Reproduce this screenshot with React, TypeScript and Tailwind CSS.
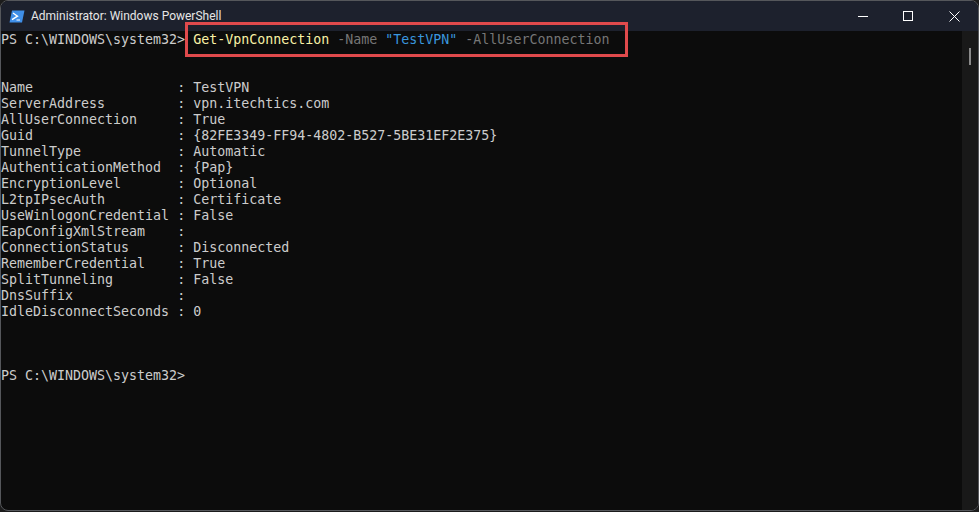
const rows: [string, string][] = [
  ["Name", "TestVPN"],
  ["ServerAddress", "vpn.itechtics.com"],
  ["AllUserConnection", "True"],
  ["Guid", "{82FE3349-FF94-4802-B527-5BE31EF2E375}"],
  ["TunnelType", "Automatic"],
  ["AuthenticationMethod", "{Pap}"],
  ["EncryptionLevel", "Optional"],
  ["L2tpIPsecAuth", "Certificate"],
  ["UseWinlogonCredential", "False"],
  ["EapConfigXmlStream", ""],
  ["ConnectionStatus", "Disconnected"],
  ["RememberCredential", "True"],
  ["SplitTunneling", "False"],
  ["DnsSuffix", ""],
  ["IdleDisconnectSeconds", "0"],
];

function PsIcon() {
  return (
    <svg width="16" height="13" viewBox="0 0 16 13">
      <path d="M3 0.5H15.5L13 12.5H0.5Z" fill="#3f8fe8" />
      <path d="M4 3L8.5 6.2L3 9.6" fill="none" stroke="#fff" strokeWidth="1.4" />
      <path d="M7.5 10H11" stroke="#fff" strokeWidth="1.2" />
    </svg>
  );
}

function WindowControls() {
  return (
    <div className="flex items-center h-full">
      <div className="w-[45px] flex justify-center">
        <div className="w-[10px] h-px bg-white" />
      </div>
      <div className="w-[46px] flex justify-center">
        <div className="w-[10px] h-[10px] border border-white" />
      </div>
      <div className="w-[46px] flex justify-center">
        <svg width="11" height="11" viewBox="0 0 11 11" stroke="#fff" strokeWidth="1">
          <path d="M0.5 0.5L10.5 10.5M10.5 0.5L0.5 10.5" />
        </svg>
      </div>
    </div>
  );
}

export default function App() {
  return (
    <div className="w-[979px] h-[512px] bg-[#1c1c1c] overflow-hidden relative font-['DejaVu_Sans_Mono',monospace]">
      <div className="h-[511px] bg-[#0c0c0c] rounded-[8px] border border-[#55575b] flex flex-col overflow-hidden">
        <div className="h-[30px] shrink-0 bg-[#1d212d] flex items-center justify-between pl-[8px] pr-[1px]">
          <div className="flex items-center gap-[6px]">
            <PsIcon />
            <span className="font-['Roboto','Liberation_Sans',sans-serif] text-[12px] text-[#e6e6e6]">
              Administrator: Windows PowerShell
            </span>
          </div>
          <WindowControls />
        </div>

        <div className="flex-1 flex">
          <div className="flex-1 text-[13.3px] leading-[16px] text-[#cccccc] whitespace-pre">
            <div className="h-[16px] mt-[1px]">
              PS C:\WINDOWS\system32&gt; <span className="text-[#f9f1a5]">Get-VpnConnection</span>
              <span className="text-[#767676]"> -Name </span>
              <span className="text-[#3a96dd]">"TestVPN"</span>
              <span className="text-[#767676]"> -AllUserConnection</span>
            </div>
            <div className="h-[32px]" />
            {rows.map(([k, v]) => (
              <div key={k} className="h-[16px]">
                {k.padEnd(21, " ")} : {v}
              </div>
            ))}
            <div className="h-[48px]" />
            <div className="h-[16px]">PS C:\WINDOWS\system32&gt;</div>
          </div>
          <div className="w-[16px] shrink-0 bg-[#191919] pt-[17px] pl-[7px]">
            <div className="w-[2px] h-[17px] bg-[#8a8a8a]" />
          </div>
        </div>
      </div>

      {/* red highlight around the command */}
      <div className="absolute left-[185px] top-[22px] w-[443px] h-[35px] border-[3px] border-[#e04a4c]" />
    </div>
  );
}
